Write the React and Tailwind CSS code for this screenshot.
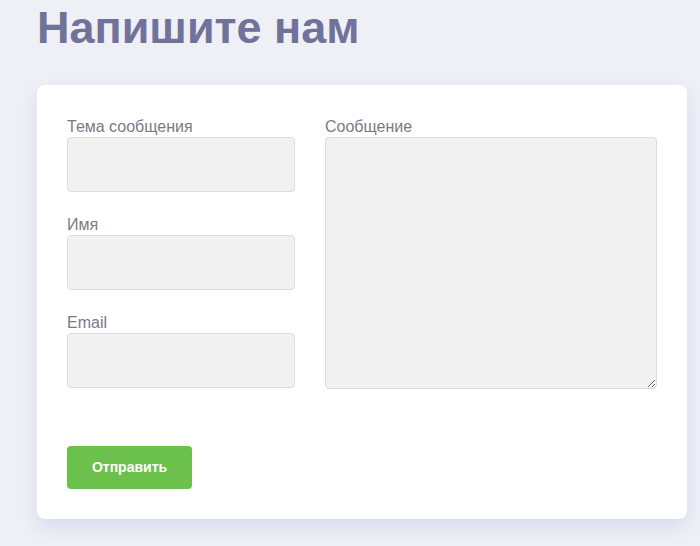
export default function App() {
  return (
    <div className="min-h-screen bg-[#eef0f6] pl-[37px] pr-[13px] pb-[27px] font-['Liberation_Sans',Arial,sans-serif]">
      {/* Title */}
      <h1 className="pt-[6px] text-[45px] leading-[44px] font-bold text-[#71729a]">
        Напишите нам
      </h1>

      {/* Form card */}
      <div className="mt-[35px] w-[650px] bg-white rounded-lg shadow-[0_8px_18px_rgba(120,120,190,0.18)] px-[30px] pt-[32px] pb-[30px]">
        <form className="flex flex-col">
          <div className="flex gap-[30px]">
            <div className="w-[228px] flex flex-col">
              <label className="text-[16px] leading-[20px] text-[#7a7a86]">Тема сообщения</label>
              <input className="h-[55px] bg-[#f1f1f1] border border-[#dcdcdc] rounded-[4px] outline-none" />

              <label className="mt-[23px] text-[16px] leading-[20px] text-[#7a7a86]">Имя</label>
              <input className="h-[55px] bg-[#f1f1f1] border border-[#dcdcdc] rounded-[4px] outline-none" />

              <label className="mt-[23px] text-[16px] leading-[20px] text-[#7a7a86]">Email</label>
              <input className="h-[55px] bg-[#f1f1f1] border border-[#dcdcdc] rounded-[4px] outline-none" />
            </div>

            <div className="flex-1 flex flex-col">
              <label className="text-[16px] leading-[20px] text-[#7a7a86]">Сообщение</label>
              <textarea className="h-[252px] bg-[#f1f1f1] border border-[#dcdcdc] rounded-[4px] outline-none" />
            </div>
          </div>

          <button
            type="button"
            className="mt-[57px] w-[125px] h-[43px] bg-[#6cc04c] text-white text-[14px] font-bold rounded-[4px]"
          >
            Отправить
          </button>
        </form>
      </div>
    </div>
  );
}
